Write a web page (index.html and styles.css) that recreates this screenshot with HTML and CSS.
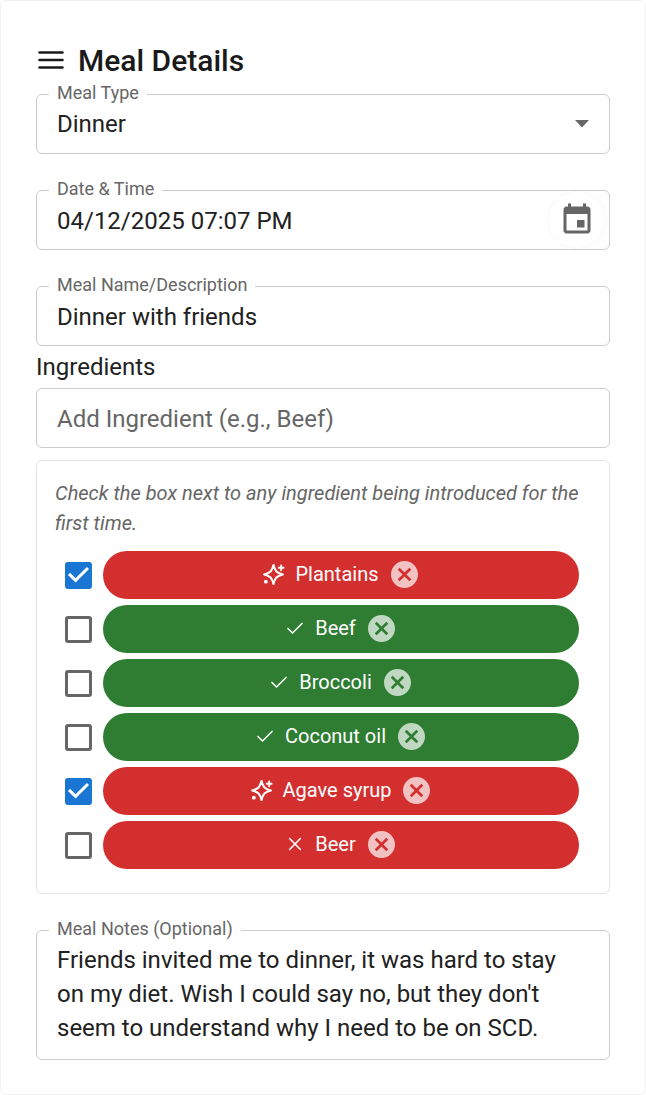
FILE: index.html
```html
<!DOCTYPE html>
<html lang="en">

<head>
    <meta charset="UTF-8" />
    <meta name="viewport" content="width=device-width, initial-scale=1.0" />
    <title>Meal Details</title>
    <link rel="stylesheet" href="styles.css">
</head>

<body>
    <!-- shared icons -->
    <svg class="icon_defs" aria-hidden="true">
        <symbol id="sparkle" viewBox="0 0 24 24">
            <path d="M12 2.200c1.600 6.500 3.300 8.200 9.800 9.800-6.500 1.600-8.200 3.300-9.800 9.800-1.600-6.500-3.300-8.200-9.800-9.800 6.500-1.600 8.200-3.300 9.800-9.800z" fill="none" stroke="currentColor" stroke-width="2.200" stroke-linejoin="round" />
            <path d="M20 2.500v5M17.500 5h5" stroke="currentColor" stroke-width="2" stroke-linecap="round" />
            <circle cx="4" cy="19.500" r="2" fill="currentColor" />
        </symbol>
        <symbol id="check" viewBox="0 0 24 24">
            <path d="M3.500 12.500l5.500 5.500L20.500 6.500" fill="none" stroke="currentColor" stroke-width="1.800" stroke-linecap="round" stroke-linejoin="round" />
        </symbol>
        <symbol id="cross" viewBox="0 0 24 24">
            <path d="M5.500 5.500l13 13M18.500 5.500l-13 13" stroke="currentColor" stroke-width="1.800" stroke-linecap="round" />
        </symbol>
        <symbol id="remove" viewBox="2 2 20 20">
            <path d="M12 2C6.470 2 2 6.470 2 12s4.470 10 10 10 10-4.470 10-10S17.530 2 12 2zm5 13.590L15.590 17 12 13.410 8.410 17 7 15.590 10.590 12 7 8.410 8.410 7 12 10.590 15.590 7 17 8.410 13.410 12 17 15.590z" fill="currentColor" />
        </symbol>
    </svg>

    <main class="card">
        <header class="card_header">
            <button class="menu_button" type="button" aria-label="Open menu">
                <svg viewBox="0 0 26 20" width="26" height="20">
                    <path d="M1.500 2.500h23M1.500 10h23M1.500 17.500h23" stroke="currentColor" stroke-width="2.500" stroke-linecap="round" />
                </svg>
            </button>
            <h1>Meal Details</h1>
        </header>

        <form>
            <div class="field">
                <label for="mealType">Meal Type</label>
                <select id="mealType">
                    <option>Breakfast</option>
                    <option>Lunch</option>
                    <option selected>Dinner</option>
                    <option>Snack</option>
                </select>
                <svg class="arrow" viewBox="0 0 14 8" width="14" height="8" aria-hidden="true">
                    <path d="M0 0h14L7 7.500z" fill="currentColor" />
                </svg>
            </div>

            <div class="field">
                <label for="mealDate">Date &amp; Time</label>
                <input type="text" id="mealDate" value="04/12/2025 07:07 PM" />
                <button class="date_button" type="button" aria-label="Choose date">
                    <svg viewBox="0 0 24 24" width="36" height="36">
                        <path d="M17 12h-5v5h5v-5zM16 1v2H8V1H6v2H5c-1.110 0-1.990.9-1.990 2L3 19c0 1.100.890 2 2 2h14c1.100 0 2-.9 2-2V5c0-1.100-.9-2-2-2h-1V1h-2zm3 18H5V8h14v11z" fill="currentColor" />
                    </svg>
                </button>
            </div>

            <div class="field">
                <label for="mealName">Meal Name/Description</label>
                <input type="text" id="mealName" value="Dinner with friends" />
            </div>

            <label class="section_label" for="ingredient">Ingredients</label>
            <div class="field">
                <input type="text" id="ingredient" placeholder="Add Ingredient (e.g., Beef)" />
            </div>

            <section class="ingredients">
                <p class="hint">Check the box next to any ingredient being introduced for the first time.</p>
                <ul>
                    <li>
                        <input type="checkbox" id="plantains" checked />
                        <div class="chip avoid">
                            <svg class="chip_icon"><use href="#sparkle" /></svg>
                            <label for="plantains">Plantains</label>
                            <button type="button" aria-label="Remove Plantains"><svg><use href="#remove" /></svg></button>
                        </div>
                    </li>
                    <li>
                        <input type="checkbox" id="beef" />
                        <div class="chip allowed">
                            <svg class="chip_icon small"><use href="#check" /></svg>
                            <label for="beef">Beef</label>
                            <button type="button" aria-label="Remove Beef"><svg><use href="#remove" /></svg></button>
                        </div>
                    </li>
                    <li>
                        <input type="checkbox" id="broccoli" />
                        <div class="chip allowed">
                            <svg class="chip_icon small"><use href="#check" /></svg>
                            <label for="broccoli">Broccoli</label>
                            <button type="button" aria-label="Remove Broccoli"><svg><use href="#remove" /></svg></button>
                        </div>
                    </li>
                    <li>
                        <input type="checkbox" id="coconut" />
                        <div class="chip allowed">
                            <svg class="chip_icon small"><use href="#check" /></svg>
                            <label for="coconut">Coconut oil</label>
                            <button type="button" aria-label="Remove Coconut oil"><svg><use href="#remove" /></svg></button>
                        </div>
                    </li>
                    <li>
                        <input type="checkbox" id="agave" checked />
                        <div class="chip avoid">
                            <svg class="chip_icon"><use href="#sparkle" /></svg>
                            <label for="agave">Agave syrup</label>
                            <button type="button" aria-label="Remove Agave syrup"><svg><use href="#remove" /></svg></button>
                        </div>
                    </li>
                    <li>
                        <input type="checkbox" id="beer" />
                        <div class="chip avoid">
                            <svg class="chip_icon small"><use href="#cross" /></svg>
                            <label for="beer">Beer</label>
                            <button type="button" aria-label="Remove Beer"><svg><use href="#remove" /></svg></button>
                        </div>
                    </li>
                </ul>
            </section>

            <div class="field notes">
                <label for="notes">Meal Notes (Optional)</label>
                <textarea id="notes" rows="3">Friends invited me to dinner, it was hard to stay on my diet. Wish I could say no, but they don't seem to understand why I need to be on SCD.</textarea>
            </div>
        </form>
    </main>
</body>

</html>
```
FILE: styles.css
```css
* {
    box-sizing: border-box;
}

body {
    margin: 0;
    background-color: #ffffff;
    color: #212121;
    font-family: Roboto, Arial, sans-serif;
    font-size: 24px;
}

button,
input,
select,
textarea {
    font: inherit;
    color: inherit;
}

button {
    display: flex;
    align-items: center;
    justify-content: center;
    padding: 0;
    border: none;
    background: none;
    cursor: pointer;
}

.icon_defs {
    display: none;
}

.card {
    padding: 40px 35px 34px;
    border: 1px solid #f2f2f2;
    border-radius: 6px;
}

.card_header {
    display: flex;
    align-items: center;
    gap: 14px;
    height: 38px;
    margin-bottom: 15px;
    color: #1a1a1a;
}

.menu_button {
    margin-left: 2px;
}

h1 {
    margin: 0;
    font-size: 30px;
    font-weight: 500;
}

form {
    display: flex;
    flex-direction: column;
}

.field {
    position: relative;
    display: flex;
    align-items: center;
    height: 60px;
    margin-bottom: 36px;
    border: 1px solid #cccccc;
    border-radius: 6px;
}

.field label {
    position: absolute;
    top: -12px;
    left: 12px;
    padding: 0 8px;
    background-color: #ffffff;
    color: #666666;
    font-size: 18px;
    line-height: 20px;
}

.field input,
.field select,
.field textarea {
    flex: 1;
    min-width: 0;
    padding: 0 20px;
    border: none;
    outline: none;
    background: none;
    appearance: none;
}

.field input {
    padding-top: 2px;
}

.field input::placeholder {
    color: #666666;
    opacity: 1;
}

.arrow {
    position: absolute;
    right: 20px;
    color: #666666;
    pointer-events: none;
}

.date_button {
    width: 60px;
    height: 58px;
    margin-right: 2px;
    border: 1px solid #f8f8f8;
    border-radius: 50%;
    color: #666666;
}

.section_label {
    margin-top: -36px;
    line-height: 42px;
}

.section_label + .field {
    margin-bottom: 12px;
}

.ingredients {
    margin-bottom: 36px;
    padding: 17px 30px 24px 18px;
    border: 1px solid #e4e4e4;
    border-radius: 6px;
}

.hint {
    margin: 0 -12px 13px 0;
    color: #666666;
    font-size: 20px;
    font-style: italic;
    line-height: 30px;
}

.ingredients ul {
    display: flex;
    flex-direction: column;
    gap: 6px;
    margin: 0;
    padding: 0;
    list-style: none;
}

.ingredients li {
    display: flex;
    align-items: center;
    gap: 11px;
    padding-left: 10px;
}

input[type="checkbox"] {
    position: relative;
    flex: none;
    width: 27px;
    height: 27px;
    margin: 0;
    border: 3px solid #666666;
    border-radius: 3px;
    appearance: none;
}

input[type="checkbox"]:checked {
    border: none;
    background-color: #1976d2;
}

input[type="checkbox"]:checked::after {
    content: "";
    position: absolute;
    inset: 0;
    background-color: #ffffff;
    clip-path: polygon(39% 78%, 11% 50%, 19% 42%, 39% 62%, 81% 20%, 89% 28%);
}

.chip {
    flex: 1;
    display: flex;
    align-items: center;
    justify-content: center;
    height: 48px;
    padding: 0 2px 2px 0;
    border-radius: 24px;
    color: #ffffff;
    font-size: 20px;
}

.chip.avoid {
    background-color: #d32f2f;
}

.chip.allowed {
    background-color: #2e7d32;
}

.chip_icon {
    width: 23px;
    height: 23px;
    margin-right: 10px;
}

.chip_icon.small {
    width: 20px;
    height: 20px;
}

.chip button {
    margin-left: 12px;
    color: rgba(255, 255, 255, 0.7);
}

.chip button svg {
    width: 27px;
    height: 27px;
}

.field.notes {
    height: auto;
    margin-bottom: 0;
    padding: 12px 0 14px;
}

.field textarea {
    height: 102px;
    padding-right: 32px;
    line-height: 34px;
    resize: none;
    overflow: hidden;
}
```
